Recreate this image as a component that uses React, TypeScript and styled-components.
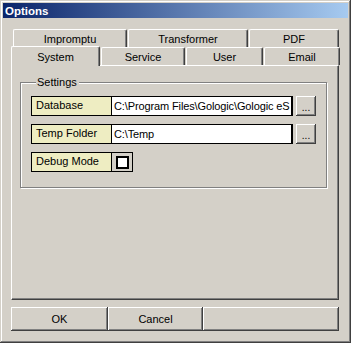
import React from "react";
import styled, { createGlobalStyle, css } from "styled-components";

const Global = createGlobalStyle`
  html, body { margin: 0; padding: 0; background: #d4d0c8; }
  body {
    font-family: "Liberation Sans", Arial, sans-serif;
    font-size: 11px;
    color: #000;
  }
  * { box-sizing: border-box; }
`;

const raised = css`
  box-shadow: inset -1px -1px #404040, inset 1px 1px #ffffff, inset -2px -2px #808080;
`;

const Window = styled.div`
  width: 351px;
  height: 343px;
  padding: 3px;
  background: #d4d0c8;
  box-shadow: inset -1px -1px #404040, inset 1px 1px #d4d0c8, inset -2px -2px #808080,
    inset 2px 2px #ffffff;
  display: flex;
  flex-direction: column;
`;

const TitleBar = styled.div`
  flex: none;
  height: 15px;
  padding-left: 2px;
  display: flex;
  align-items: center;
  background: linear-gradient(to right, #0a246a, #a6caf0);
  color: #ffffff;
  font-weight: bold;
  font-size: 11.5px;
`;

const Content = styled.div`
  flex: 1;
  display: flex;
  flex-direction: column;
  padding: 11px 9px 9px 8px;
`;

const TabStrip = styled.div`
  flex: none;
  display: flex;
  flex-direction: column;
  position: relative;
  z-index: 1;
`;

const TabRow = styled.div<{ $indent: number }>`
  display: flex;
  height: 18px;
  gap: 1px;
  padding-left: ${(p) => p.$indent}px;
`;

const Tab = styled.div<{ $w: number; $active?: boolean }>`
  flex: none;
  width: ${(p) => p.$w}px;
  height: 18px;
  background: #d4d0c8;
  border-top: 1px solid #ffffff;
  border-left: 1px solid #ffffff;
  border-right: 1px solid #404040;
  box-shadow: inset -1px 0 #808080;
  border-radius: 2px 2px 0 0;
  display: flex;
  align-items: center;
  justify-content: center;
  padding-top: 1px;
  position: relative;
  ${(p) =>
    p.$active &&
    css`
      height: 20px;
      margin-top: -1px;
      margin-bottom: -1px;
      z-index: 2;
      padding-top: 0;
    `}
`;

const Panel = styled.div`
  flex: none;
  height: 235px;
  border-top: 1px solid #ffffff;
  border-left: 1px solid #ffffff;
  border-right: 1px solid #404040;
  border-bottom: 1px solid #404040;
  box-shadow: inset -1px -1px #808080;
  padding: 10px 11px 0 8px;
`;

const Group = styled.fieldset`
  margin: 0;
  height: 112px;
  border: 1px solid #808080;
  box-shadow: inset 1px 1px #ffffff, 1px 1px #ffffff;
  padding: 7px 0 0 10px;
  display: flex;
  flex-direction: column;
  gap: 8px;
`;

const Legend = styled.legend`
  margin-left: 5px;
  padding: 0 2px 0 1px;
  background: #d4d0c8;
  font-size: 11px;
  line-height: 13px;
`;

const Row = styled.div`
  display: flex;
  height: 20px;
  align-items: stretch;
`;

const Label = styled.div`
  width: 81px;
  flex: none;
  background: #eeedc2;
  border: 1px solid #000000;
  padding: 2px 0 0 4px;
  line-height: 13px;
`;

const Field = styled.div`
  width: 181px;
  flex: none;
  background: #ffffff;
  border: 1px solid #000000;
  border-left: none;
  border-right-width: 2px;
  padding: 3px 0 0 2px;
  line-height: 13px;
  letter-spacing: -0.12px;
  white-space: nowrap;
  overflow: hidden;
`;

const Browse = styled.div`
  width: 20px;
  flex: none;
  margin-left: 3px;
  ${raised};
  background: #d4d0c8;
  display: flex;
  align-items: center;
  justify-content: center;
  padding-top: 2px;
  font-size: 10px;
`;

const CheckCell = styled.div`
  width: 21px;
  flex: none;
  border: 1px solid #000000;
  border-left: none;
  background: #d4d0c8;
  display: flex;
  align-items: center;
  justify-content: center;
`;

const CheckBox = styled.div`
  width: 13px;
  height: 13px;
  border: 2px solid #000000;
  background: #ffffff;
`;

const ButtonBar = styled.div`
  flex: none;
  margin-top: 7px;
  display: flex;
  height: 24px;
`;

const BarButton = styled.div<{ $w: number }>`
  width: ${(p) => p.$w}px;
  flex: none;
  ${raised};
  display: flex;
  align-items: center;
  justify-content: center;
`;

export default function App() {
  return (
    <>
      <Global />
      <Window>
        <TitleBar>Options</TitleBar>
        <Content>
          <TabStrip>
            <TabRow $indent={2}>
              <Tab $w={114}>Impromptu</Tab>
              <Tab $w={120}>Transformer</Tab>
              <Tab $w={90}>PDF</Tab>
            </TabRow>
            <TabRow $indent={0}>
              <Tab $w={89} $active>
                System
              </Tab>
              <Tab $w={84}>Service</Tab>
              <Tab $w={77}>User</Tab>
              <Tab $w={76}>Email</Tab>
            </TabRow>
          </TabStrip>
          <Panel>
            <Group>
              <Legend>Settings</Legend>
              <Row>
                <Label>Database</Label>
                <Field>C:\Program Files\Gologic\Gologic eS</Field>
                <Browse>...</Browse>
              </Row>
              <Row>
                <Label>Temp Folder</Label>
                <Field>C:\Temp</Field>
                <Browse>...</Browse>
              </Row>
              <Row>
                <Label>Debug Mode</Label>
                <CheckCell>
                  <CheckBox />
                </CheckCell>
              </Row>
            </Group>
          </Panel>
          <ButtonBar>
            <BarButton $w={97}>OK</BarButton>
            <BarButton $w={95}>Cancel</BarButton>
            <BarButton $w={136} />
          </ButtonBar>
        </Content>
      </Window>
    </>
  );
}
